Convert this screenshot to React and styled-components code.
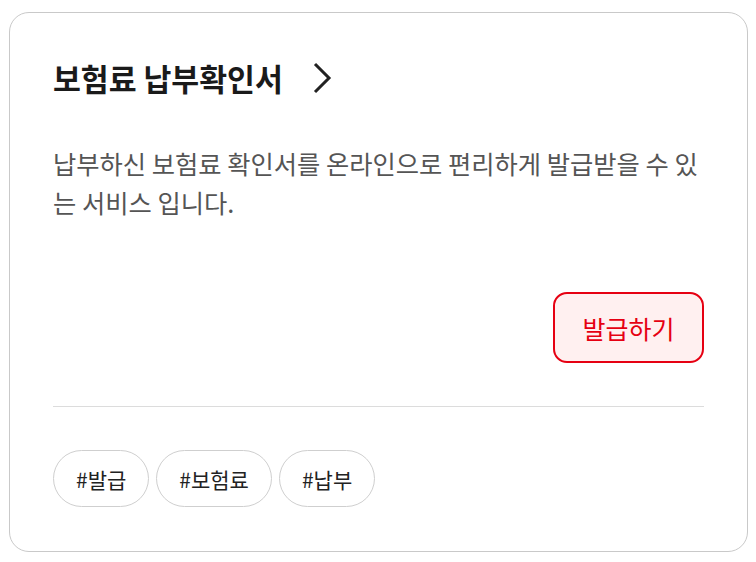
import React from 'react'
import styled, { createGlobalStyle } from 'styled-components';

const GlobalStyle = createGlobalStyle`
    body {
        margin: 0;
        background: #fff;
        font-family: 'Noto Sans CJK KR', 'Noto Sans', sans-serif;
    }
`;

const Card = styled.div`
    box-sizing: border-box;
    margin: 12px 0 0 9px;
    width: 739px;
    height: 540px;
    border: 1px solid #c9c9c9;
    border-radius: 20px;
    padding: 40px 43px 43px;
    display: flex;
    flex-direction: column;
`;

const TitleRow = styled.div`
    display: flex;
    align-items: center;
    gap: 29px;
    height: 50px;
`;

const Title = styled.h2`
    margin: 0;
    font-size: 30.3px;
    font-weight: 700;
    color: #1a1a1a;
`;

const Description = styled.p`
    margin: 41px 0 0;
    font-size: 25.3px;
    line-height: 39px;
    color: #555;
`;

const Actions = styled.div`
    display: flex;
    justify-content: flex-end;
    margin-top: 70px;
`;

const IssueButton = styled.button`
    width: 151px;
    height: 71px;
    border: 2px solid #e60012;
    border-radius: 14px;
    background: #fff0f0;
    color: #e60012;
    font-family: inherit;
    font-size: 25px;
    cursor: pointer;
`;

const Divider = styled.hr`
    margin: 43px 0 0;
    border: none;
    border-top: 1px solid #dcdcdc;
`;

const Tags = styled.div`
    display: flex;
    gap: 7px;
    margin-top: 43px;
`;

const Tag = styled.span`
    box-sizing: border-box;
    height: 57px;
    padding: 0 22px;
    display: inline-flex;
    align-items: center;
    border: 1px solid #cfcfcf;
    border-radius: 29px;
    font-size: 21px;
    color: #222;
`;

function App() {
    return (
        <>
            <GlobalStyle />
            <Card>
                <TitleRow>
                    <Title>보험료 납부확인서</Title>
                    <svg width="20" height="32" viewBox="0 0 20 32" fill="none">
                        <path d="M3 2 L17 16 L3 30" stroke="#222" strokeWidth="3" />
                    </svg>
                </TitleRow>
                <Description>
                    납부하신 보험료 확인서를 온라인으로 편리하게 발급받을 수 있는 서비스 입니다.
                </Description>
                <Actions>
                    <IssueButton>발급하기</IssueButton>
                </Actions>
                <Divider />
                <Tags>
                    <Tag>#발급</Tag>
                    <Tag>#보험료</Tag>
                    <Tag>#납부</Tag>
                </Tags>
            </Card>
        </>
    )
}
export default App;
